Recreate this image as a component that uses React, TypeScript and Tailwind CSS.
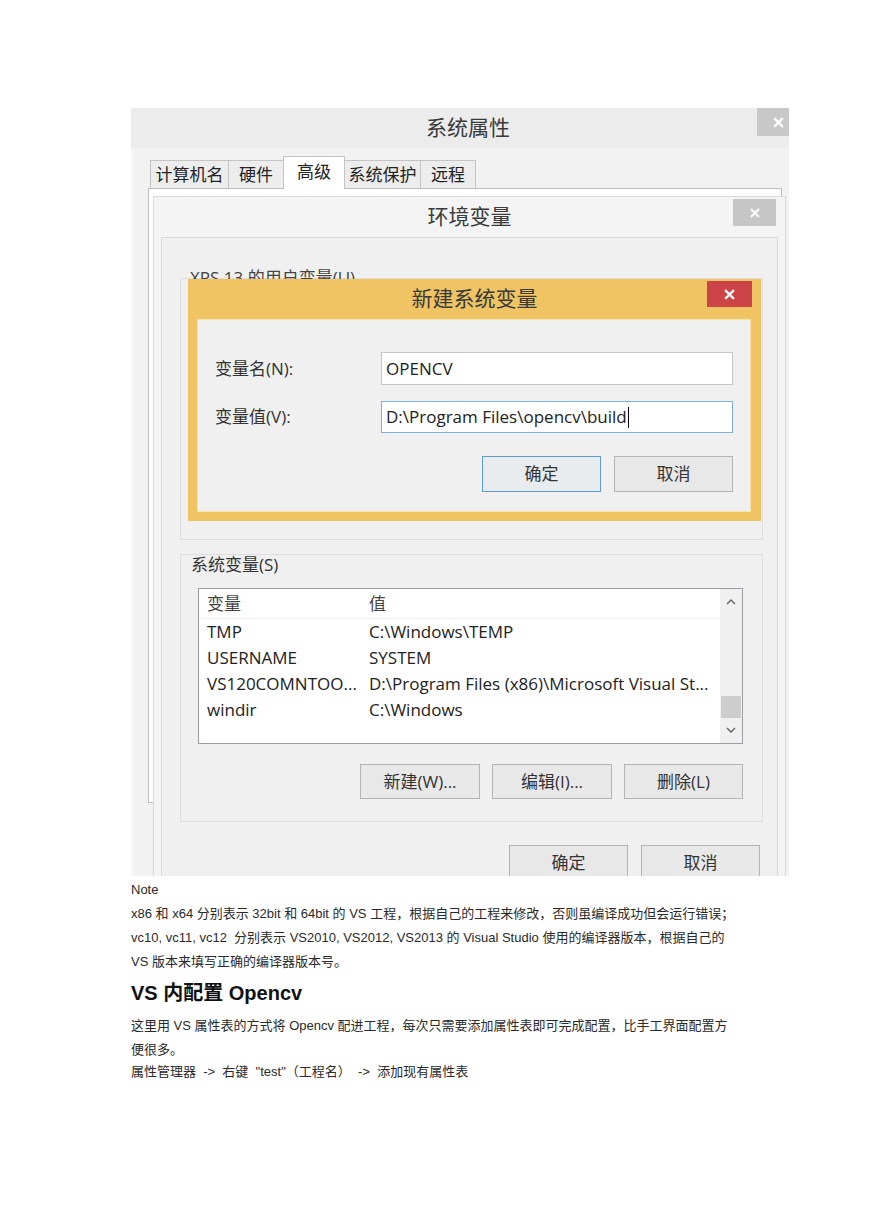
import React from 'react';

const ui = { fontFamily: '"Open Sans", "Noto Sans CJK SC", sans-serif' };
const doc = { fontFamily: '"Liberation Sans", "Noto Sans CJK SC", sans-serif' };

function CloseIcon({ size = 10 }: { size?: number }) {
  return (
    <svg width={size} height={size} viewBox="0 0 10 10" fill="none" stroke="white" strokeWidth={2}>
      <path d="M1 1l8 8M9 1l-8 8" />
    </svg>
  );
}

function WinButton({ label, width = 'w-[119px]', height = 'h-[34px]', focused = false }: { label: string; width?: string; height?: string; focused?: boolean }) {
  return (
    <div
      className={`${width} ${height} flex items-center justify-center text-[17px] text-[#333] border ${
        focused ? 'border-[#5d9bd6] bg-[#e9ecef]' : 'border-[#b4b4b4] bg-[#e8e8e8]'
      }`}
    >
      {label}
    </div>
  );
}

const tabs = [
  { label: '计算机名', w: 'w-[79px]' },
  { label: '硬件', w: 'w-[56px]' },
  { label: '高级', w: 'w-[62px]', active: true },
  { label: '系统保护', w: 'w-[77px]' },
  { label: '远程', w: 'w-[56px]' },
];

const rows = [
  ['TMP', 'C:\\Windows\\TEMP'],
  ['USERNAME', 'SYSTEM'],
  ['VS120COMNTOO...', 'D:\\Program Files (x86)\\Microsoft Visual St...'],
  ['windir', 'C:\\Windows'],
];

function NewVarDialog() {
  return (
    <div className="absolute left-[8px] top-[11px] w-[573px] h-[242px] bg-[#f0c462] flex flex-col">
      <div className="grid grid-cols-[54px_1fr_54px] h-[40px]">
        <div />
        <div className="flex items-center justify-center text-[21px] text-[#3a3a3a]">新建系统变量</div>
        <div className="pt-[2px]">
          <div className="w-[45px] h-[26px] bg-[#cc4448] flex items-center justify-center">
            <CloseIcon size={11} />
          </div>
        </div>
      </div>
      <div className="ml-[9px] mr-[10px] h-[193px] bg-[#f0f0f0] border border-[#f6e3b0] pl-[17px] pr-[17px] flex flex-col">
        <div className="mt-[32px] flex items-center">
          <div className="w-[166px] text-[17px] text-[#333]">变量名(N):</div>
          <div className="w-[352px] h-[33px] bg-white border border-[#c3c5ca] pl-[4px] flex items-center text-[17px] text-[#222]">
            OPENCV
          </div>
        </div>
        <div className="mt-[16px] flex items-center">
          <div className="w-[166px] text-[17px] text-[#333]">变量值(V):</div>
          <div className="w-[352px] h-[32px] bg-white border border-[#7fb0e2] pl-[4px] flex items-center text-[17px] text-[#222]">
            D:\Program Files\opencv\build
            <span className="inline-block w-px h-[21px] bg-black ml-px" />
          </div>
        </div>
        <div className="mt-[23px] flex justify-end gap-[13px]">
          <WinButton label="确定" height="h-[36px]" focused />
          <WinButton label="取消" height="h-[36px]" />
        </div>
      </div>
    </div>
  );
}

function VarList() {
  return (
    <div className="ml-[17px] mt-[13px] w-[545px] h-[156px] bg-white border border-[#9a9da3] flex">
      <div className="flex-1 flex flex-col">
        <div className="h-[30px] flex items-center border-b border-[#f1f1f1] text-[17px] text-[#444]">
          <div className="w-[162px] pl-[8px]">变量</div>
          <div className="pl-[8px]">值</div>
        </div>
        {rows.map(([k, v]) => (
          <div key={k} className="h-[26px] flex items-center text-[17px] text-[#222] whitespace-nowrap">
            <div className="w-[162px] pl-[8px]">{k}</div>
            <div className="pl-[8px]">{v}</div>
          </div>
        ))}
      </div>
      <div className="w-[22px] bg-[#f0f0f0] flex flex-col items-center">
        <div className="h-[26px] flex items-center justify-center">
          <svg width="10" height="6" viewBox="0 0 10 6" fill="none" stroke="#606060" strokeWidth={1.4}>
            <path d="M1 5l4-4 4 4" />
          </svg>
        </div>
        <div className="mt-[82px] w-[20px] h-[22px] bg-[#cdcdcd]" />
        <div className="mt-auto h-[26px] flex items-center justify-center">
          <svg width="10" height="6" viewBox="0 0 10 6" fill="none" stroke="#606060" strokeWidth={1.4}>
            <path d="M1 1l4 4 4-4" />
          </svg>
        </div>
      </div>
    </div>
  );
}

function EnvWindow() {
  return (
    <div className="absolute left-[22px] top-[88px] w-[633px] h-[720px] bg-[#f4f4f4] border border-[#dadada]">
      <div className="grid grid-cols-[52px_1fr_52px] h-[40px]">
        <div />
        <div className="flex items-center justify-center text-[21px] text-[#3a3a3a]">环境变量</div>
        <div className="pt-[2px]">
          <div className="w-[43px] h-[27px] bg-[#c6c6c6] flex items-center justify-center">
            <CloseIcon size={10} />
          </div>
        </div>
      </div>
      <div className="mx-[7px] h-[680px] bg-[#f0f0f0] border border-[#d8d8d8] pl-[18px] pr-[14px] pt-[30px]">
        <div className="relative h-[272px]">
          <div className="pl-[10px] h-[20px] leading-[20px] text-[17px] text-[#444]">XPS 13 的用户变量(U)</div>
          <div className="-mt-[10px] h-[262px] border border-[#dedede]" />
          <NewVarDialog />
        </div>
        <div className="mt-[14px] h-[268px] border border-[#dedede]">
          <div className="pl-[10px] h-[20px] leading-[20px] text-[17px] text-[#333]">系统变量(S)</div>
          <VarList />
          <div className="mt-[20px] flex justify-end gap-[12px] pr-[19px]">
            <WinButton label="新建(W)..." width="w-[120px]" height="h-[35px]" />
            <WinButton label="编辑(I)..." width="w-[120px]" height="h-[35px]" />
            <WinButton label="删除(L)" width="w-[119px]" height="h-[35px]" />
          </div>
        </div>
        <div className="mt-[23px] flex justify-end gap-[13px] pr-[3px]">
          <WinButton label="确定" height="h-[36px]" />
          <WinButton label="取消" height="h-[36px]" />
        </div>
      </div>
    </div>
  );
}

function Screenshot() {
  return (
    <div className="relative w-[658px] h-[768px] overflow-hidden bg-[#f0f0f0]" style={ui}>
      <div className="w-[674px]">
        <div className="grid grid-cols-[48px_1fr_48px] h-[40px] bg-[#ececec]">
          <div />
          <div className="flex items-center justify-center text-[21px] text-[#3a3a3a]">系统属性</div>
          <div className="w-[42px] h-[28px] bg-[#c8c8c8] flex items-center justify-center">
            <CloseIcon size={11} />
          </div>
        </div>
        <div className="bg-[#f2f2f2] h-[728px] pl-[14px] pt-[8px] border-l-[3px] border-[#f7f7f7]">
          <div className="ml-[2px] flex items-end h-[32px]">
            {tabs.map((t) => (
              <div
                key={t.label}
                className={`${t.w} -mr-px flex items-center justify-center border border-b-0 border-[#c4c4c4] text-[17px] text-[#222] ${
                  t.active ? 'h-[33px] bg-white relative z-10 -mb-px pb-[3px]' : 'h-[28px] bg-[#ededed]'
                }`}
              >
                {t.label}
              </div>
            ))}
          </div>
          <div className="w-[634px] h-[615px] bg-white border border-[#bdbdbd]" />
        </div>
      </div>
      <EnvWindow />
    </div>
  );
}

export default function App() {
  return (
    <div className="w-[869px] min-h-[1228px] bg-white pt-[108px] pl-[131px]">
      <Screenshot />
      <div className="pt-[2px] text-[13px] leading-[24px] text-[#2a2a2a] whitespace-pre" style={doc}>
        <div>Note</div>
        <div>x86 和 x64 分别表示 32bit 和 64bit 的 VS 工程，根据自己的工程来修改，否则虽编译成功但会运行错误；</div>
        <div>vc10, vc11, vc12  分别表示 VS2010, VS2012, VS2013 的 Visual Studio 使用的编译器版本，根据自己的</div>
        <div>VS 版本来填写正确的编译器版本号。</div>
        <h2 className="mt-[5px] text-[20px] leading-[28px] font-bold text-[#111]">VS 内配置 Opencv</h2>
        <div className="mt-[7px]">这里用 VS 属性表的方式将 Opencv 配进工程，每次只需要添加属性表即可完成配置，比手工界面配置方</div>
        <div>便很多。</div>
        <div className="-mt-[2px]">属性管理器  -&gt;  右键  "test"（工程名）  -&gt;  添加现有属性表</div>
      </div>
    </div>
  );
}
